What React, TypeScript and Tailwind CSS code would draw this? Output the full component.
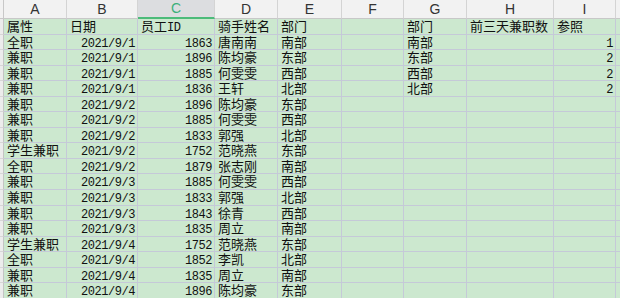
import React from 'react';

type Cell = { text: string; align?: 'left' | 'right' };

const columns = ['A', 'B', 'C', 'D', 'E', 'F', 'G', 'H', 'I', ''];

const riders: [string, string, string, string, string][] = [
  ['全职', '2021/9/1', '1863', '唐南南', '南部'],
  ['兼职', '2021/9/1', '1896', '陈均豪', '东部'],
  ['兼职', '2021/9/1', '1885', '何雯雯', '西部'],
  ['兼职', '2021/9/1', '1836', '王轩', '北部'],
  ['兼职', '2021/9/2', '1896', '陈均豪', '东部'],
  ['兼职', '2021/9/2', '1885', '何雯雯', '西部'],
  ['兼职', '2021/9/2', '1833', '郭强', '北部'],
  ['学生兼职', '2021/9/2', '1752', '范晓燕', '东部'],
  ['全职', '2021/9/2', '1879', '张志刚', '南部'],
  ['兼职', '2021/9/3', '1885', '何雯雯', '西部'],
  ['兼职', '2021/9/3', '1833', '郭强', '北部'],
  ['兼职', '2021/9/3', '1843', '徐青', '西部'],
  ['兼职', '2021/9/3', '1835', '周立', '南部'],
  ['学生兼职', '2021/9/4', '1752', '范晓燕', '东部'],
  ['全职', '2021/9/4', '1852', '李凯', '北部'],
  ['兼职', '2021/9/4', '1835', '周立', '南部'],
  ['兼职', '2021/9/4', '1896', '陈均豪', '东部'],
];

// summary table on the right (G:I)
const summary: [string, string][] = [
  ['南部', '1'],
  ['东部', '2'],
  ['西部', '2'],
  ['北部', '2'],
];

const buildRows = (): Cell[][] => {
  const head: Cell[] = [
    { text: '属性' },
    { text: '日期' },
    { text: '员工ID' },
    { text: '骑手姓名' },
    { text: '部门' },
    { text: '' },
    { text: '部门' },
    { text: '前三天兼职数' },
    { text: '参照' },
    { text: '' },
  ];
  const body = riders.map((r, i) => {
    const s = summary[i];
    return [
      { text: r[0] },
      { text: r[1], align: 'right' },
      { text: r[2], align: 'right' },
      { text: r[3] },
      { text: r[4] },
      { text: '' },
      { text: s ? s[0] : '' },
      { text: '' },
      { text: s ? s[1] : '', align: 'right' },
      { text: '' },
    ] as Cell[];
  });
  return [head, ...body];
};

// latin/digit runs get a half-width mono font, like the sheet's SimSun
const renderText = (text: string) =>
  text.split(/([A-Za-z0-9/]+)/).map((part, i) =>
    /^[A-Za-z0-9/]+$/.test(part) ? (
      <span key={i} className="font-['Liberation_Mono',monospace] text-[12px] tracking-[-0.45px]">
        {part}
      </span>
    ) : (
      <span key={i}>{part}</span>
    )
  );

const App: React.FC = () => {
  const rows = buildRows();

  return (
    <div className="w-[620px] h-[298px] overflow-hidden bg-white">
      <div className="grid grid-cols-[4px_63px_71px_77px_63px_64px_62px_63px_87px_62px_40px] font-['Noto_Sans_CJK_SC',sans-serif] text-[13px] text-[#111]">
        {/* column letters */}
        <div className="h-[19px] bg-[#f2f2f2] border-r border-b border-[#c8c8c8]" />
        {columns.map((c) =>
          c === 'C' ? (
            <div
              key={c}
              className="h-[19px] bg-[#dcdde0] border-r border-[#d4d4d4] border-b-2 border-b-[#4cbb7a] flex items-center justify-center font-['Liberation_Sans',sans-serif] text-[14px] text-[#3cb07a]"
            >
              {c}
            </div>
          ) : (
            <div
              key={c || 'J'}
              className="h-[19px] bg-[#f2f2f2] border-r border-b border-[#d4d4d4] border-b-[#c8c8c8] flex items-center justify-center font-['Liberation_Sans',sans-serif] text-[14px] text-[#333]"
            >
              {c}
            </div>
          )
        )}

        {rows.map((row, ri) => (
          <React.Fragment key={ri}>
            <div className="h-[15.55px] bg-[#ececec] border-r border-b border-[#c4c4c4] border-b-[#d6d6d6]" />
            {row.map((cell, ci) => (
              <div
                key={ci}
                className={`h-[15.55px] bg-[#cce8cf] border-r border-b border-[#c5c9d8] leading-[14px] whitespace-nowrap ${
                  cell.align === 'right' ? 'text-right pr-[2px]' : 'pl-[3px]'
                }`}
              >
                {renderText(cell.text)}
              </div>
            ))}
          </React.Fragment>
        ))}
      </div>
    </div>
  );
};

export default App;
